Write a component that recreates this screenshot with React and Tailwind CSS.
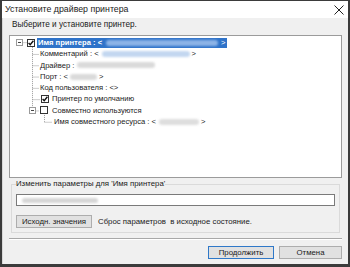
import React from "react";

const font = { fontFamily: '"Liberation Sans", Arial, sans-serif' };

function Check({ checked }) {
  return (
    <svg width="8" height="8" viewBox="0 0 8 8" className="shrink-0 block">
      <rect x="0.5" y="0.5" width="7" height="7" fill="#fff" stroke="#333" />
      {checked && (
        <path d="M1.6 4.1 L3.2 5.8 L6.4 1.8" fill="none" stroke="#111" strokeWidth="1.4" />
      )}
    </svg>
  );
}

function Expander() {
  return (
    <svg width="7" height="7" viewBox="0 0 7 7" className="shrink-0 block">
      <rect x="0.5" y="0.5" width="6" height="6" fill="#fff" stroke="#9a9a9a" />
      <path d="M2 3.5 H5" stroke="#444" strokeWidth="1" />
    </svg>
  );
}

function Row({ children, className = "" }) {
  return <div className={"h-[11.3px] flex items-center whitespace-nowrap " + className}>{children}</div>;
}

export default function App() {
  const rowH = 11.3;
  const cy = (i) => 1 + rowH * i + rowH / 2;
  return (
    <div
      className="w-[350px] h-[267px] bg-[#f0f0f0] border-x-2 border-b-[3px] border-t border-[#3b3b3b] flex flex-col text-[#1a1a1a]"
      style={font}
    >
      <div className="h-[17px] bg-white flex items-center justify-between pl-[3px] pr-[4px] shrink-0">
        <span className="text-[8.8px]">Установите драйвер принтера</span>
        <svg width="10" height="10" viewBox="0 0 10 10">
          <path d="M0.5 0.5 L9.5 9.5 M9.5 0.5 L0.5 9.5" stroke="#222" strokeWidth="1" />
        </svg>
      </div>
      <div className="flex-1 border-l border-[#d8d8d8] px-[6px] flex flex-col">
        <div className="text-[8.2px] leading-[10px] mt-[2px] pl-[3px]">Выберите и установите принтер.</div>
        <div className="mt-[5px] h-[143px] bg-white border border-[#9b9b9b] relative text-[7.6px] shrink-0">
          <svg className="absolute left-0 top-0" width="200" height="100" viewBox="0 0 200 100">
            <g stroke="#9a9a9a" strokeWidth="1" strokeDasharray="1 1" fill="none">
              <path d={`M13.5 ${cy(0)} H17`} />
              <path d={`M22.5 ${cy(0) + 4.5} V${cy(6) - 3.5}`} />
              {[1, 2, 3, 4].map((i) => (
                <path key={i} d={`M22.5 ${cy(i) + 0.5} H29`} />
              ))}
              <path d={`M22.5 ${cy(5) + 0.5} H30`} />
              <path d={`M25.5 ${cy(6) + 0.5} H29`} />
              <path d={`M34.5 ${cy(6) + 4.5} V${cy(7)}`} />
              <path d={`M34.5 ${cy(7) + 0.5} H42`} />
            </g>
          </svg>
          <div className="pt-[1px] relative">
            <Row className="pl-[6px]">
              <Expander />
              <div className="w-[4px] shrink-0" />
              <Check checked />
              <div className="ml-[2px] h-[10px] w-[190px] shrink-0 bg-[#2f73c9] text-white flex items-center pl-[1px]">
                <span className="font-bold shrink-0">Имя принтера : &lt;</span>
                <div className="ml-[4px] h-[6px] w-[112px] shrink-0 bg-[#8cb3e6] blur-[1px] rounded-sm" />
                <span className="ml-[3px] shrink-0">&gt;</span>
              </div>
            </Row>
            <Row className="pl-[30px]">
              <span>Комментарий : &lt;</span>
              <div className="ml-[3px] h-[6px] w-[88px] shrink-0 bg-[#c3d7f0] blur-[1px] rounded-sm" />
              <span className="ml-[2px]">&gt;</span>
            </Row>
            <Row className="pl-[30px]">
              <span>Драйвер : </span>
              <div className="ml-[3px] h-[6px] w-[78px] shrink-0 bg-[#dadada] blur-[1px] rounded-sm" />
            </Row>
            <Row className="pl-[30px]">
              <span>Порт : &lt;</span>
              <div className="ml-[2px] h-[6px] w-[27px] shrink-0 bg-[#dadada] blur-[1px] rounded-sm" />
              <span className="ml-[2px]">&gt;</span>
            </Row>
            <Row className="pl-[30px]">
              <span>Код пользователя : &lt;&gt;</span>
            </Row>
            <Row className="pl-[31px]">
              <Check checked />
              <span className="ml-[3px]">Принтер по умолчанию</span>
            </Row>
            <Row className="pl-[19px]">
              <Expander />
              <div className="w-[4px] shrink-0" />
              <Check />
              <span className="ml-[4px]">Совместно используются</span>
            </Row>
            <Row className="pl-[44px]">
              <span>Имя совместного ресурса : &lt;</span>
              <div className="ml-[3px] h-[6px] w-[40px] shrink-0 bg-[#dedede] blur-[1px] rounded-sm" />
              <span className="ml-[2px]">&gt;</span>
            </Row>
          </div>
        </div>
        <fieldset className="mt-[1px] mx-[2px] border border-[#dadada] px-[4px] pb-[4px] shrink-0">
          <legend className="text-[7.8px] leading-[10px] px-0">Изменить параметры для 'Имя принтера'</legend>
          <div className="mt-[5px] h-[12px] bg-white border border-[#7a7a7a] flex items-center pl-[5px]">
            <div className="h-[5px] w-[76px] bg-[#d6d6d6] blur-[1px] rounded-sm" />
          </div>
          <div className="mt-[9px] flex items-center text-[7.8px] whitespace-nowrap">
            <div className="h-[13px] w-[76px] bg-[#e1e1e1] border border-[#adadad] flex items-center justify-center">
              Исходн. значения
            </div>
            <span className="ml-[6px]">Сброс параметров&nbsp; в исходное состояние.</span>
          </div>
        </fieldset>
        <div className="mt-[5px] h-[2px] border-t border-[#a8a8a8] border-b border-b-white shrink-0" />
        <div className="mt-[6px] flex justify-end gap-[5px] text-[7.8px] shrink-0">
          <div className="h-[13px] w-[66px] bg-[#e1e1e1] border border-[#2f78c8] flex items-center justify-center">
            Продолжить
          </div>
          <div className="h-[13px] w-[63px] bg-[#e1e1e1] border border-[#adadad] flex items-center justify-center">
            Отмена
          </div>
        </div>
      </div>
    </div>
  );
}
